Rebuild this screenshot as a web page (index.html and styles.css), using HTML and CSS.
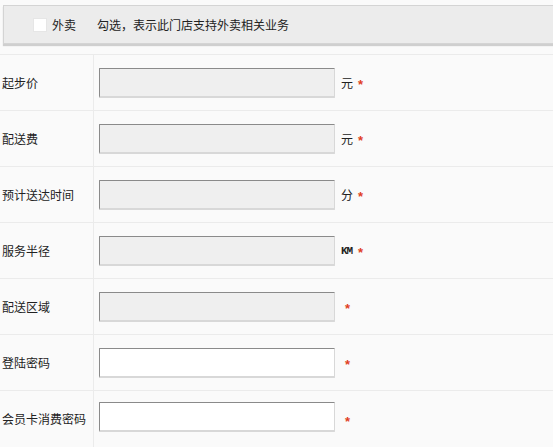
FILE: index.html
```html
<!DOCTYPE html>
<html lang="zh-CN">
<head>
<meta charset="utf-8">
<link rel="stylesheet" href="styles.css">
</head>
<body>
<div class="panel">
  <label class="check"><span class="box"></span>外卖</label>
  <span class="hint">勾选，表示此门店支持外卖相关业务</span>
</div>
<div class="form">
  <div class="row">
    <div class="label">起步价</div>
    <div class="field"><span class="input disabled"></span><span class="unit">元</span><span class="star">*</span></div>
  </div>
  <div class="row">
    <div class="label">配送费</div>
    <div class="field"><span class="input disabled"></span><span class="unit">元</span><span class="star">*</span></div>
  </div>
  <div class="row">
    <div class="label">预计送达时间</div>
    <div class="field"><span class="input disabled"></span><span class="unit">分</span><span class="star">*</span></div>
  </div>
  <div class="row">
    <div class="label">服务半径</div>
    <div class="field"><span class="input disabled"></span><span class="unit km">KM</span><span class="star">*</span></div>
  </div>
  <div class="row">
    <div class="label">配送区域</div>
    <div class="field"><span class="input disabled"></span><span class="unit"></span><span class="star solo">*</span></div>
  </div>
  <div class="row">
    <div class="label">登陆密码</div>
    <div class="field"><span class="input"></span><span class="unit"></span><span class="star solo">*</span></div>
  </div>
  <div class="row last">
    <div class="label">会员卡消费密码</div>
    <div class="field"><span class="input"></span><span class="unit"></span><span class="star solo">*</span></div>
  </div>
</div>
</body>
</html>
```
FILE: styles.css
```css
html, body {
  margin: 0;
  padding: 0;
  background: #fafafa;
  overflow: hidden;
}
body {
  font-family: "Noto Sans CJK SC", "Liberation Sans", sans-serif;
  font-size: 12px;
  color: #222;
  width: 553px;
  height: 447px;
}
.panel {
  margin: 5px -20px 0 3px;
  height: 37px;
  background: #ececec;
  border: 1px solid #d4d4d4;
  box-shadow: 0 2px 1px #cfcfcf;
  display: flex;
  align-items: center;
  padding-left: 30px;
}
.check {
  display: flex;
  align-items: center;
}
.box {
  width: 12px;
  height: 12px;
  background: #fff;
  margin-right: 6px;
  box-shadow: 0 0 0 1px #e6e6e6;
}
.hint {
  margin-left: 21px;
}
.form {
  margin-top: 10px;
  background: #fafafa;
}
.row {
  display: flex;
  height: 55px;
  border-top: 1px solid #ebebeb;
}
.row.last {
  height: 60px;
}
.label {
  width: 94px;
  flex: none;
  border-right: 1px solid #ebebeb;
  display: flex;
  align-items: center;
  padding-left: 2px;
  box-sizing: border-box;
}
.field {
  display: flex;
  align-items: center;
  padding-left: 5px;
}
.row.last .field {
  align-items: flex-start;
  padding-top: 11px;
}
.row.last .label {
  align-items: flex-start;
  padding-top: 19px;
}
.row.last .field .unit,
.row.last .field .star { margin-top: 9px; }
.input {
  display: block;
  width: 234px;
  height: 27px;
  background: #fff;
  border-style: solid;
  border-color: #8a8a8a #d8d8d8 #d8d8d8 #8a8a8a;
  border-width: 1px 1px 2px 1px;
  border-radius: 1px;
}
.input.disabled {
  background: #efefef;
}
.unit {
  margin-left: 6px;
  min-width: 12px;
}
.unit:empty {
  min-width: 0;
}
.unit.km {
  font-family: "Liberation Mono", monospace;
  font-size: 11px;
  font-weight: bold;
  letter-spacing: -1px;
}
.star {
  color: #e0401d;
  margin-left: 5px;
  font-family: "Liberation Sans", sans-serif;
  font-size: 13px;
  font-weight: bold;
  padding-top: 3px;
}
.star.solo {
  margin-left: 4px;
}
```
